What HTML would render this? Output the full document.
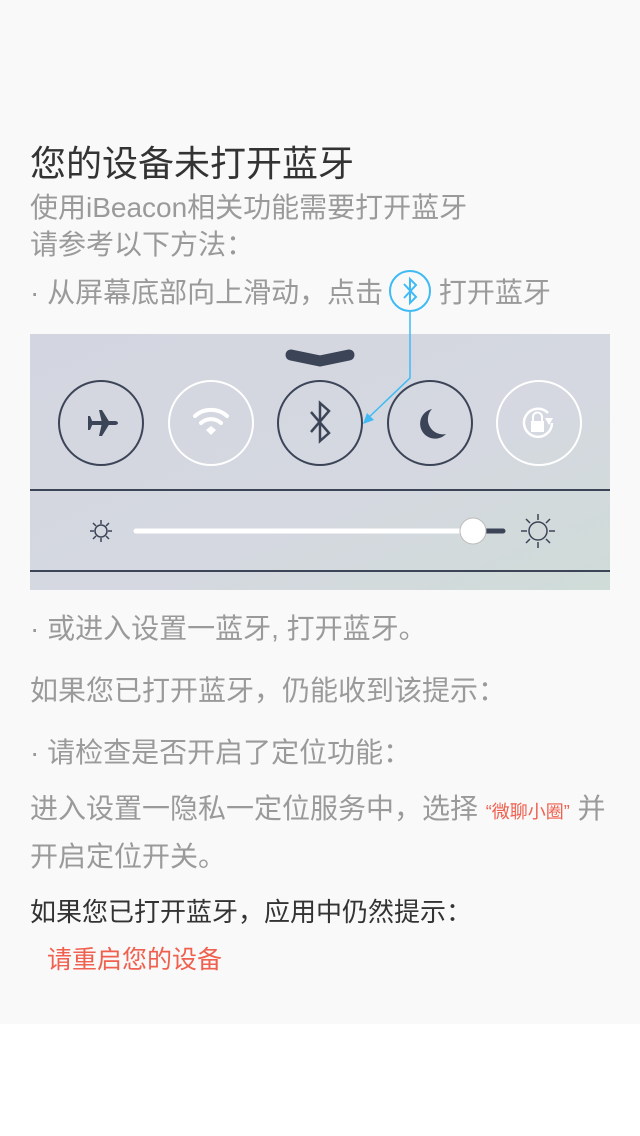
<!DOCTYPE html>
<html><head><meta charset="utf-8"><style>
html,body{margin:0;padding:0;width:640px;height:1136px;background:#fff;overflow:hidden}
.bg{position:absolute;left:0;top:0;width:640px;height:1024px;background:#f9f9f9}
.t{position:absolute;left:30px;white-space:nowrap;font-family:"Liberation Sans","Noto Sans CJK SC",sans-serif;color:#9a9a9a;font-size:28px;line-height:40px}
</style></head><body>
<div class="bg"></div>
<div class="t" style="top:144px;font-size:36px;color:#333">您的设备未打开蓝牙</div>
<div class="t" style="top:188px">使用iBeacon相关功能需要打开蓝牙</div>
<div class="t" style="top:225px">请参考以下方法：</div>
<div class="t" style="top:273px">· 从屏幕底部向上滑动，点击 <span style="display:inline-block;width:48px"></span>打开蓝牙</div>
<svg style="position:absolute;left:0;top:0" width="640" height="600">
<defs><linearGradient id="g" x1="0" y1="0" x2="1" y2="1"><stop offset="0" stop-color="#d3d6e0"/><stop offset="0.6" stop-color="#d5d8e0"/><stop offset="1" stop-color="#cfdcd8"/></linearGradient></defs>
<rect x="30" y="334" width="580" height="256" fill="url(#g)"/>
<path d="M291 355 L320 361 L349 355" stroke="#3c4457" stroke-width="11" stroke-linecap="round" stroke-linejoin="round" fill="none"/>
<g fill="none" stroke-width="2">
<circle cx="101" cy="423" r="42" stroke="#3c4457"/>
<circle cx="211" cy="423" r="42" stroke="#fff"/>
<circle cx="320" cy="423" r="42" stroke="#3c4457"/>
<circle cx="430" cy="423" r="42" stroke="#3c4457"/>
<circle cx="539" cy="423" r="42" stroke="#fff"/>
</g>
<path d="M88 421h27a3 2 0 0 1 0 4h-27z M99 410l3 0 8 13-8 13-3 0 3-13z M88 416l2 0 3 7-3 7-2 0z" fill="#3c4457"/>
<g fill="none" stroke="#fff" stroke-width="4" stroke-linecap="round">
<path d="M195 416a24 24 0 0 1 32 0"/><path d="M201 423a15 15 0 0 1 20 0"/>
</g>
<path d="M206 430l5-4 5 4-5 5z" fill="#fff"/>
<path d="M311 412l18 21-9 8v-38l9 8-18 21" fill="none" stroke="#3c4457" stroke-width="2.5"/>
<path d="M432 409a15 15 0 1 0 14 25a15 15 0 0 1-14-25z" fill="#3c4457"/>
<g fill="none" stroke="#fff" stroke-width="2.5"><path d="M552 423a14 14 0 1 1-4-10"/></g>
<path d="M545 418l8 0-4 7z" fill="#fff"/>
<rect x="531" y="421" width="13" height="11" fill="#fff"/><path d="M533 421v-4a4.5 4.5 0 0 1 9 0v4" stroke="#fff" stroke-width="2" fill="none"/>
<line x1="30" y1="490" x2="610" y2="490" stroke="#3c4457" stroke-width="2"/>
<line x1="30" y1="571" x2="610" y2="571" stroke="#3c4457" stroke-width="2"/>
<line x1="136" y1="531" x2="470" y2="531" stroke="#fff" stroke-width="5" stroke-linecap="round"/>
<line x1="478" y1="531" x2="503" y2="531" stroke="#3c4457" stroke-width="5" stroke-linecap="round"/>
<circle cx="473" cy="531" r="13" fill="#fff" stroke="#bbb" stroke-width="1"/>
<g stroke="#3c4457" stroke-width="1.5" fill="none">
<circle cx="101" cy="531" r="6"/>
<path d="M101 520v4M101 538v4M90 531h4M108 531h4M93 523l3 3M106 536l3 3M93 539l3-3M106 526l3-3"/>
<circle cx="538" cy="531" r="9"/>
<path d="M538 514v6M538 542v6M521 531h6M549 531h6M526 519l4 4M546 539l4 4M526 543l4-4M546 523l4-4"/>
</g>
<circle cx="410" cy="291" r="20" fill="none" stroke="#3fbaf5" stroke-width="2"/>
<path d="M404 284l12 13-6 6v-24l6 6-12 13" fill="none" stroke="#3fbaf5" stroke-width="2"/>
<path d="M410 312v66l-44 42" fill="none" stroke="#3fbaf5" stroke-width="1.5"/>
<path d="M363 424l4-11 7 7z" fill="#3fbaf5"/>
</svg>
<div class="t" style="top:609px">· 或进入设置一蓝牙, 打开蓝牙。</div>
<div class="t" style="top:671px">如果您已打开蓝牙，仍能收到该提示：</div>
<div class="t" style="top:733px">· 请检查是否开启了定位功能：</div>
<div class="t" style="top:789px">进入设置一隐私一定位服务中，选择 <span style="color:#f0604f;font-size:18px">“微聊小圈”</span> 并</div>
<div class="t" style="top:837px">开启定位开关。</div>
<div class="t" style="top:892px;font-size:26px;color:#333">如果您已打开蓝牙，应用中仍然提示：</div>
<div class="t" style="top:940px;left:47px;font-size:25px;color:#f0604f">请重启您的设备</div>
</body></html>
